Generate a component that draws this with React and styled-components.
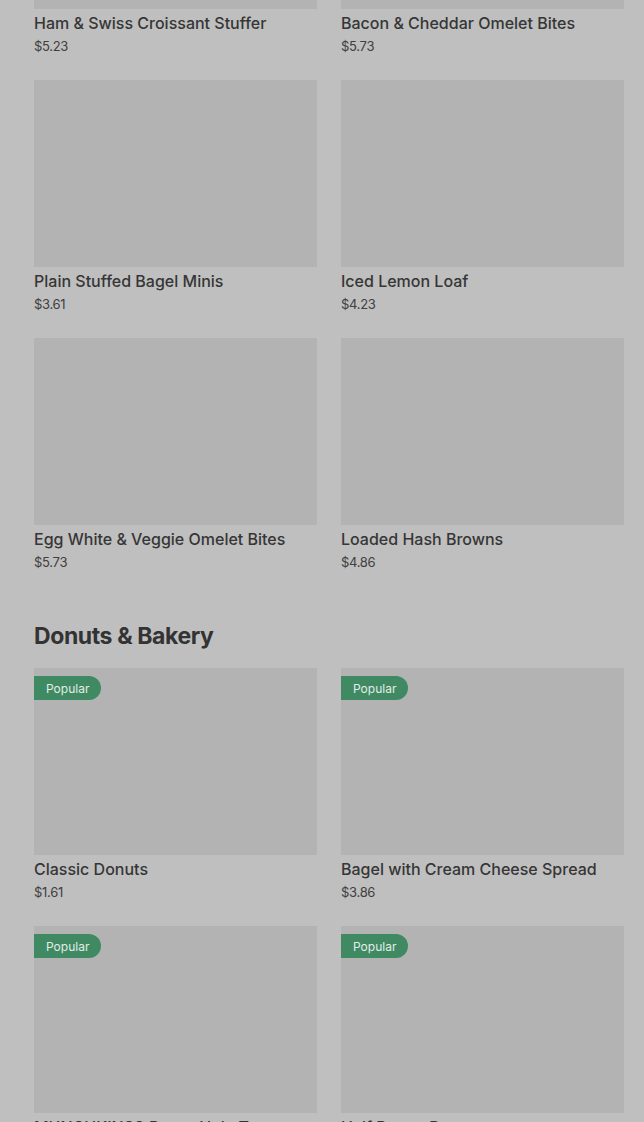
import React from "react"
import styled, { createGlobalStyle } from "styled-components"

const Global = createGlobalStyle`
  body {
    margin: 0;
    background: #bfbfbf;
    font-family: Inter, "Noto Sans", sans-serif;
    color: #333333;
  }
`

const Page = styled.main`
  padding: 0 20px 0 34px;
  margin-top: -178px;
  height: 1300px;
  overflow: hidden;
`

const Section = styled.section`
  & + & {
    margin-top: 49px;
  }
`

const Heading = styled.h2`
  margin: 0 0 16px;
  font-size: 23px;
  line-height: 32px;
  font-weight: 700;
  letter-spacing: -0.4px;
  color: #333333;
`

const Grid = styled.div`
  display: grid;
  grid-template-columns: 283px 283px;
  column-gap: 24px;
  row-gap: 25px;
`

const Card = styled.article`
  display: flex;
  flex-direction: column;
`

const Thumb = styled.div`
  position: relative;
  height: 187px;
  background: #b3b3b3;
`

const Badge = styled.span`
  position: absolute;
  top: 8px;
  left: 0;
  height: 24px;
  padding: 0 12px;
  display: flex;
  align-items: center;
  background: #3f8a62;
  color: #e4ece7;
  font-size: 12px;
  border-radius: 0 12px 12px 0;
`

const Title = styled.div`
  margin-top: 4px;
  font-size: 16px;
  line-height: 20px;
  font-weight: 500;
  color: #363636;
`

const Price = styled.div`
  margin-top: 4px;
  font-size: 13px;
  line-height: 18px;
  color: #404040;
  letter-spacing: -0.3px;
`

const breakfast = [
  ["Ham & Swiss Croissant Stuffer", "$5.23"],
  ["Bacon & Cheddar Omelet Bites", "$5.73"],
  ["Plain Stuffed Bagel Minis", "$3.61"],
  ["Iced Lemon Loaf", "$4.23"],
  ["Egg White & Veggie Omelet Bites", "$5.73"],
  ["Loaded Hash Browns", "$4.86"],
]

const bakery = [
  ["Classic Donuts", "$1.61"],
  ["Bagel with Cream Cheese Spread", "$3.86"],
  ["MUNCHKINS® Donut Hole Treats", "$5.49"],
  ["Half Dozen Donuts", "$9.99"],
]

const Item = ({ name, price, popular }) => (
  <Card>
    <Thumb>{popular && <Badge>Popular</Badge>}</Thumb>
    <Title>{name}</Title>
    <Price>{price}</Price>
  </Card>
)

export default function App() {
  return (
    <>
      <Global />
      <Page>
        <Section>
          <Grid>
            {breakfast.map(([n, p]) => (
              <Item key={n} name={n} price={p} />
            ))}
          </Grid>
        </Section>
        <Section>
          <Heading>Donuts &amp; Bakery</Heading>
          <Grid>
            {bakery.map(([n, p]) => (
              <Item key={n} name={n} price={p} popular />
            ))}
          </Grid>
        </Section>
      </Page>
    </>
  )
}
